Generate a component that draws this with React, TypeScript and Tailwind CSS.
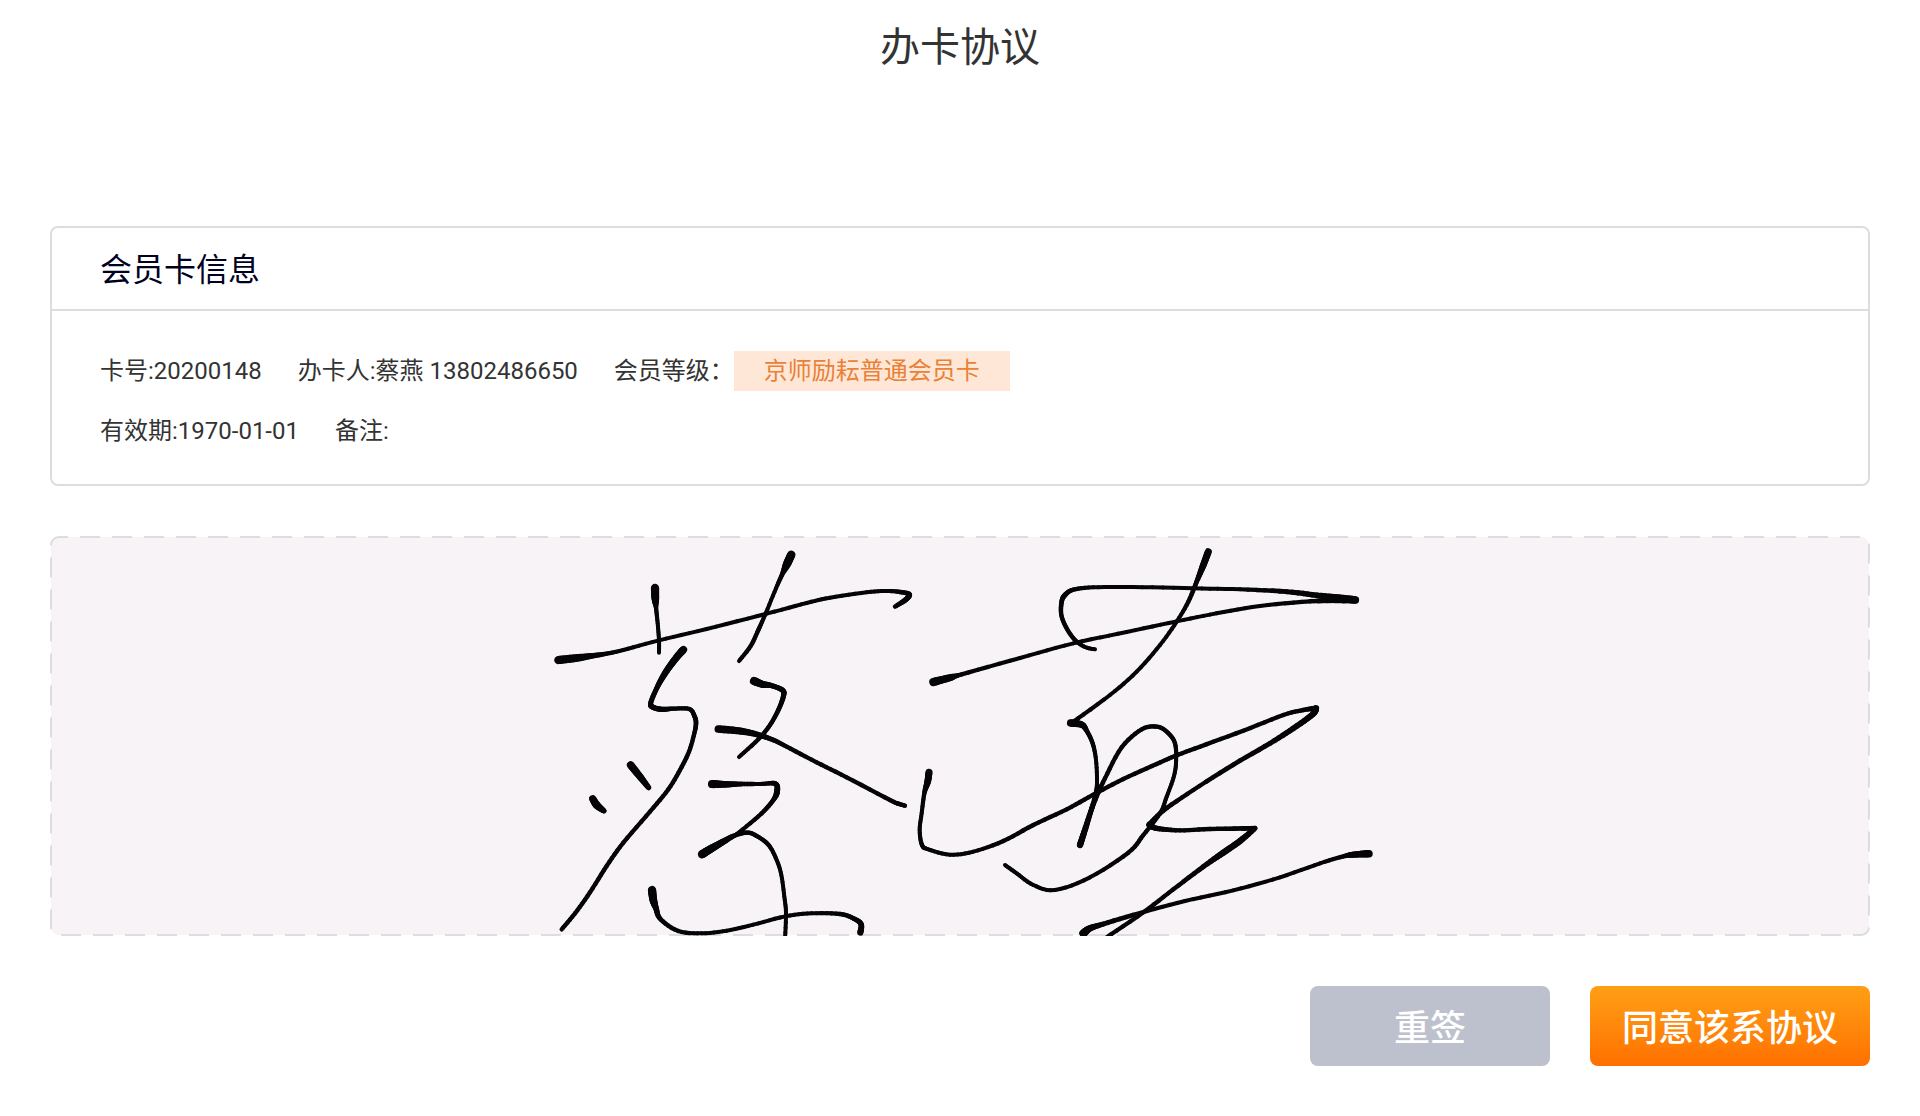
import React from 'react';

type Point = [x: number, y: number, width: number];

/* Pen strokes of the signature: each point carries its own pen width. */
const STROKES: Point[][] = [
  [[55, 390, 24], [110, 384, 22], [160, 377, 15], [200, 371, 12], [250, 360, 11], [357, 331, 11], [500, 297, 11], [680, 251, 11], [800, 219, 11], [870, 203, 11], [980, 187, 11], [1040, 183, 11], [1080, 186, 12], [1108, 193, 14], [1097, 209, 15], [1065, 230, 12]],
  [[345, 174, 24], [346, 205, 22], [348, 232, 12], [353, 280, 11], [357, 331, 11], [357, 368, 11]],
  [[754, 74, 24], [742, 100, 24], [728, 130, 13], [708, 175, 11], [678, 248, 11], [655, 300, 12], [632, 348, 12], [597, 393, 11]],
  [[430, 359, 22], [405, 388, 20], [375, 430, 18], [350, 475, 14], [332, 520, 14], [340, 532, 15], [365, 538, 15], [400, 536, 12], [448, 537, 12], [464, 560, 13], [468, 580, 13], [463, 610, 12], [447, 665, 12], [420, 720, 12], [385, 778, 12], [330, 845, 12], [250, 938, 12], [200, 1008, 12], [150, 1087, 12], [105, 1150, 12], [65, 1198, 12]],
  [[642, 453, 24], [668, 463, 20], [695, 467, 14], [728, 481, 15], [730, 500, 14], [715, 540, 13], [690, 585, 12], [655, 628, 12], [597, 681, 11]],
  [[535, 597, 22], [600, 603, 20], [650, 613, 16], [700, 630, 13], [740, 650, 12], [830, 697, 12], [920, 742, 12], [1050, 810, 12], [1075, 821, 12], [1095, 827, 12]],
  [[272, 705, 22], [300, 740, 20], [326, 773, 14]],
  [[158, 806, 20], [170, 825, 22], [192, 843, 14]],
  [[516, 762, 24], [560, 763, 18], [605, 762, 13], [660, 762, 11], [706, 761, 14], [711, 785, 17], [700, 810, 13], [665, 850, 12], [600, 905, 11], [585, 916, 11]],
  [[486, 973, 24], [510, 958, 23], [550, 935, 18], [585, 916, 13], [620, 908, 12], [645, 915, 12], [685, 944, 12], [710, 990, 11], [724, 1035, 11], [733, 1100, 11], [738, 1150, 11], [735, 1230, 11]],
  [[336, 1080, 24], [340, 1110, 22], [348, 1135, 16], [362, 1168, 13], [415, 1203, 12], [485, 1210, 11], [560, 1202, 11], [640, 1184, 11], [736, 1159, 11], [815, 1150, 11], [900, 1152, 12], [940, 1165, 13], [963, 1182, 15], [961, 1208, 18]],
  [[1180, 456, 24], [1230, 443, 20], [1265, 433, 12], [1440, 384, 11], [1600, 340, 11], [1760, 306, 11], [1910, 274, 11], [2030, 250, 11], [2160, 228, 11], [2310, 214, 12], [2446, 210, 20]],
  [[2446, 210, 22], [2400, 204, 20], [2330, 196, 16], [2240, 185, 14], [2100, 178, 11], [1960, 175, 11], [1780, 171, 11], [1660, 172, 11], [1600, 179, 12], [1575, 195, 14], [1565, 215, 13], [1564, 255, 12], [1580, 295, 12], [1605, 330, 12], [1635, 351, 11], [1665, 358, 11]],
  [[2005, 65, 20], [1990, 105, 19], [1970, 155, 13], [1945, 215, 12], [1910, 275, 11], [1860, 345, 11], [1790, 425, 11], [1710, 495, 11], [1603, 573, 12]],
  [[1592, 579, 22], [1625, 584, 18], [1640, 602, 13], [1658, 640, 12], [1668, 690, 11], [1671, 760, 11], [1665, 800, 13], [1645, 870, 14], [1630, 915, 17], [1620, 945, 18]],
  [[1620, 945, 16], [1640, 880, 14], [1665, 810, 14], [1695, 745, 12], [1745, 652, 12], [1805, 598, 12], [1850, 590, 12], [1880, 605, 12], [1905, 640, 12], [1908, 700, 11], [1900, 745, 11], [1880, 800, 11], [1860, 850, 11], [1810, 915, 12], [1765, 968, 12], [1650, 1042, 11], [1545, 1080, 11], [1480, 1065, 11], [1430, 1030, 11], [1395, 1005, 11]],
  [[1167, 727, 20], [1163, 755, 19], [1153, 790, 12], [1145, 850, 11], [1139, 900, 11], [1146, 945, 12], [1165, 958, 11], [1230, 974, 11], [1300, 965, 11], [1390, 933, 12], [1480, 885, 12], [1580, 838, 12], [1660, 794, 12], [1750, 747, 12], [1850, 702, 12], [1905, 678, 12], [1980, 650, 12], [2110, 602, 12], [2230, 555, 12], [2290, 540, 12], [2328, 535, 16]],
  [[2328, 535, 18], [2318, 553, 17], [2260, 595, 16], [2190, 640, 14], [2080, 704, 13], [1960, 780, 12], [1870, 842, 13], [1828, 884, 15]],
  [[1828, 884, 18], [1850, 895, 15], [1920, 901, 12], [2010, 897, 12], [2145, 895, 14]],
  [[2145, 895, 14], [2100, 933, 18], [2050, 968, 18], [1990, 1010, 14], [1900, 1078, 12], [1810, 1147, 12], [1700, 1222, 12]],
  [[2487, 971, 22], [2440, 974, 17], [2410, 979, 12], [2340, 1000, 11], [2220, 1042, 11], [2080, 1081, 11], [1935, 1113, 11], [1800, 1149, 12], [1690, 1182, 14], [1650, 1195, 18], [1630, 1210, 24]],
];

const STEPS = 6;

function spline(a: number, b: number, c: number, d: number, t: number) {
  return 0.5 * (2 * b + (c - a) * t + (2 * a - 5 * b + 4 * c - d) * t * t + (3 * b - a - 3 * c + d) * t * t * t);
}

function smooth(points: Point[]): Point[] {
  const out: Point[] = [];
  for (let i = 0; i < points.length - 1; i++) {
    const p0 = points[Math.max(0, i - 1)];
    const p1 = points[i];
    const p2 = points[i + 1];
    const p3 = points[Math.min(points.length - 1, i + 2)];
    for (let s = 0; s < STEPS; s++) {
      const t = s / STEPS;
      out.push([
        spline(p0[0], p1[0], p2[0], p3[0], t),
        spline(p0[1], p1[1], p2[1], p3[1], t),
        p1[2] + (p2[2] - p1[2]) * t,
      ]);
    }
  }
  out.push(points[points.length - 1]);
  return out;
}

function Stroke({ points }: { points: Point[] }) {
  const line = smooth(points);
  return (
    <g>
      {line.slice(1).map((p, i) => (
        <line key={i} x1={line[i][0]} y1={line[i][1]} x2={p[0]} y2={p[1]} strokeWidth={(line[i][2] + p[2]) / 2 + 1} />
      ))}
    </g>
  );
}

function SignaturePad() {
  return (
    <svg className="mt-[50px] block h-[400px] w-full" role="img" aria-label="签名">
      <rect
        x="1"
        y="1"
        rx="8"
        className="h-[calc(100%-2px)] w-[calc(100%-2px)] fill-[#f7f3f7] stroke-[#dddddf] stroke-2"
        strokeDasharray="20 12"
        strokeDashoffset="11"
      />
      <svg width="100%" height="100%" viewBox="0 18 2520 1200">
        <g className="stroke-[#050508]" strokeLinecap="round" fill="none">
          {STROKES.map((points, i) => (
            <Stroke key={i} points={points} />
          ))}
        </g>
      </svg>
    </svg>
  );
}

export default function App() {
  return (
    <main className="min-h-screen bg-white px-[50px] pb-[50px] font-[Roboto,'Noto_Sans_CJK_SC',sans-serif] text-[#333333]">
      <h1 className="pt-[18px] text-center text-[40px] leading-[60px]">办卡协议</h1>

      <section className="mt-[148px] rounded-lg border-2 border-[#dddddf]">
        <h2 className="border-b-2 border-[#dddddf] px-12 pt-[3px] text-[32px] leading-[78px] text-[#00001f]">会员卡信息</h2>
        <div className="flex flex-col gap-5 px-12 pt-10 pb-[33px] text-2xl leading-10">
          <div className="flex flex-wrap gap-x-9">
            <span>卡号:20200148</span>
            <span>办卡人:蔡燕 13802486650</span>
            <div className="flex">
              <span>会员等级：</span>
              <span className="bg-[#ffe7d7] px-[30px] text-[#e98136]">京师励耘普通会员卡</span>
            </div>
          </div>
          <div className="flex flex-wrap gap-x-9">
            <span>有效期:1970-01-01</span>
            <span>备注:</span>
          </div>
        </div>
      </section>

      <SignaturePad />

      <div className="mt-[50px] flex justify-end gap-10 text-4xl font-medium text-white">
        <button type="button" className="h-20 w-60 rounded-lg bg-[#bdc1ce] pt-1.5">
          重签
        </button>
        <button type="button" className="h-20 w-[280px] rounded-lg bg-linear-to-b from-[#ff9f15] to-[#ff7000] pt-1.5">
          同意该系协议
        </button>
      </div>
    </main>
  );
}
